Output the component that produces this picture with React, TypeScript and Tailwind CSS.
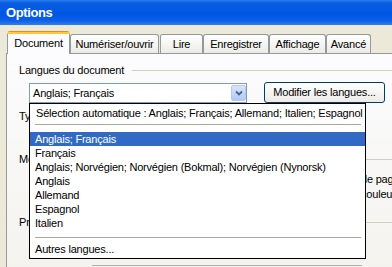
const tabs = [
  { label: 'Numériser/ouvrir', w: 'w-[89px]', extra: '' },
  { label: 'Lire', w: 'w-[43px]', extra: 'ml-[1px]' },
  { label: 'Enregistrer', w: 'w-[66px]', extra: '' },
  { label: 'Affichage', w: 'w-[57px]', extra: '' },
  { label: 'Avancé', w: 'w-[45px]', extra: '' },
];

const languages = [
  'Anglais; Français',
  'Français',
  'Anglais; Norvégien; Norvégien (Bokmal); Norvégien (Nynorsk)',
  'Anglais',
  'Allemand',
  'Espagnol',
  'Italien',
];

function GroupHeader({ label }: { label: string }) {
  return (
    <div className="flex h-[14px] items-center gap-[8px] pl-[12px] whitespace-nowrap">
      <span>{label}</span>
      <div className="mt-px h-px flex-1 bg-[#d0d0bf]" />
    </div>
  );
}

function LanguageList() {
  return (
    <div className="absolute left-0 top-[21px] z-20 h-[156px] w-[337px] border border-black bg-white pt-[2px] whitespace-nowrap">
      <div className="flex h-[14px] items-center pl-[6px]">
        Sélection automatique : Anglais; Français; Allemand; Italien; Espagnol
      </div>
      <div className="h-[12px] pt-[4px] pl-[5px] pr-[4px]">
        <div className="h-px bg-[#aca899]" />
      </div>
      {languages.map((lang, i) => (
        <div
          key={lang}
          className={`flex h-[14px] items-center pl-[5px] ${i === 0 ? 'bg-[#316ac5] text-white' : ''}`}
        >
          {lang}
        </div>
      ))}
      <div className="h-[12px] pt-[7px] pl-[5px] pr-[4px]">
        <div className="h-px bg-[#aca899]" />
      </div>
      <div className="flex h-[14px] items-center pl-[5px]">Autres langues...</div>
    </div>
  );
}

export default function App() {
  return (
    <div className="h-[267px] w-[392px] overflow-hidden bg-[#ece9d8] font-['Liberation_Sans',Arial,sans-serif] text-[11px] tracking-[-0.2px] text-black">
      {/* title bar */}
      <div className="h-[25px] bg-[linear-gradient(to_bottom,#2a7cf0_0px,#0a5ee0_3px,#0055e5_14px,#0a5ee6_20px,#2a7ff5_25px)] pl-[6px] pt-[5px] text-[13px] font-bold leading-[15px] tracking-[-0.4px] text-white">
        Options
      </div>

      <div className="pt-[6px]">
        {/* tabs */}
        <div className="flex h-[22px] items-end pl-[7px]">
          <div className="relative z-10 -mb-px flex h-[23px] w-[63px] flex-col overflow-hidden rounded-t-[3px] bg-[#fcfcfe]">
            <div className="h-px bg-[#e68b2c]" />
            <div className="h-[2px] bg-[#ffc83c]" />
            <div className="flex flex-1 items-center justify-center border-x border-[#919b9c] pb-[2px]">
              Document
            </div>
          </div>
          {tabs.map((t) => (
            <div
              key={t.label}
              className={`flex h-[19px] ${t.w} ${t.extra} items-center justify-center rounded-t-[3px] border border-b-0 border-[#919b9c] bg-gradient-to-b from-[#ffffff] to-[#ecebe5] whitespace-nowrap`}
            >
              {t.label}
            </div>
          ))}
        </div>

        {/* tab panel */}
        <div className="ml-[6px] h-[214px] border-l border-t border-[#919b9c] bg-gradient-to-b from-[#fcfcfe] to-[#f4f3ee]">
          <div className="pt-[9px]">
            <GroupHeader label="Langues du document" />
          </div>

          <div className="mt-[5px] flex h-[21px]">
            <div className="relative ml-[22px] w-[218px]">
              <div className="mt-px flex h-[20px] items-center border border-[#7f9db9] bg-white">
                <span className="pl-[3px]">Anglais; Français</span>
                <div className="ml-auto flex h-[16px] w-[15px] items-center justify-center rounded-[2px] border border-[#b6c9f1] bg-gradient-to-b from-[#d7e4fe] to-[#b2c9f7]">
                  <svg width="8" height="6" viewBox="0 0 8 6">
                    <path d="M1 1.5 L4 4.5 L7 1.5" fill="none" stroke="#4d6185" strokeWidth="1.8" />
                  </svg>
                </div>
              </div>
              <LanguageList />
            </div>
            <div className="ml-[17px] flex h-[21px] w-[121px] items-center justify-center rounded-[3px] border border-[#003c74] bg-gradient-to-b from-[#ffffff] to-[#ecebe6] whitespace-nowrap">
              Modifier les langues...
            </div>
          </div>

          <div className="mt-[6px] flex h-[14px] items-center pl-[12px] whitespace-nowrap">
            Type de document :
          </div>

          <div className="mt-[29px]">
            <GroupHeader label="Mode de numérisation" />
          </div>

          <div className="mt-[6px] flex h-[14px] items-center pl-[354px] whitespace-nowrap">
            de page
          </div>
          <div className="mt-[1px] flex h-[14px] items-center pl-[354px] whitespace-nowrap">
            couleur
          </div>

          <div className="mt-[14px]">
            <GroupHeader label="Prétraitement des images" />
          </div>

          <div className="ml-[85px] mt-[36px] h-px w-[270px] bg-[#b0b0b0]" />
        </div>
      </div>
    </div>
  );
}
